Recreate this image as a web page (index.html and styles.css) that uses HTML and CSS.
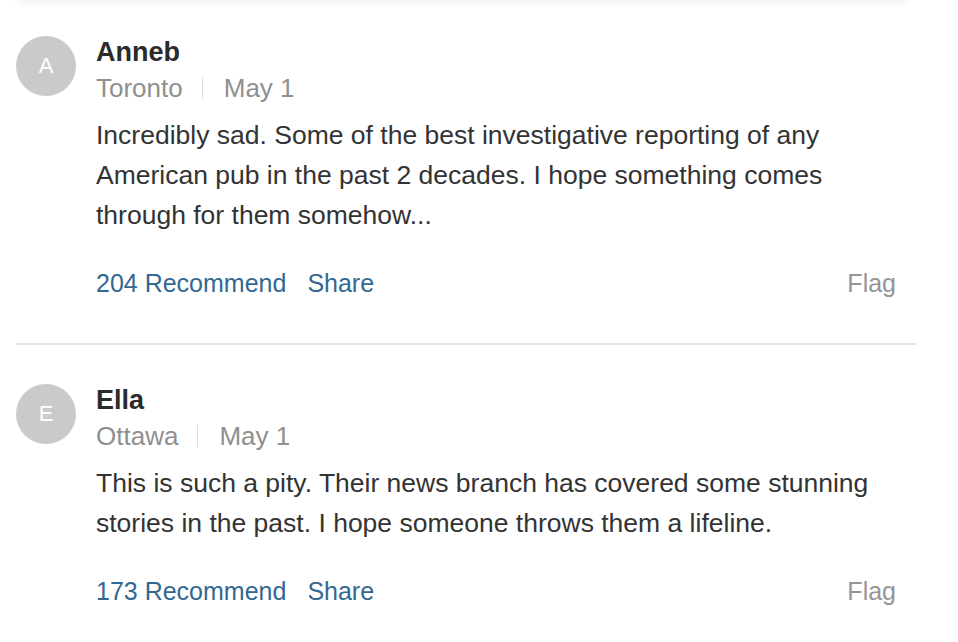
FILE: index.html
```html
<!DOCTYPE html>
<html lang="en">
<head>
    <meta charset="UTF-8">
    <meta name="viewport" content="width=device-width, initial-scale=1.0">
    <title>Comments</title>
    <link rel="stylesheet" href="styles.css">
</head>
<body>
    <div class="prev-card"></div>

    <div class="comment-list">
        <div class="comment">
            <div class="avatar">A</div>
            <div class="comment-body">
                <div class="author">Anneb</div>
                <div class="meta">
                    <span>Toronto</span>
                    <span class="sep"></span>
                    <span>May 1</span>
                </div>
                <p class="text">Incredibly sad. Some of the best investigative reporting of any American pub in the past 2 decades. I hope something comes through for them somehow...</p>
                <div class="actions">
                    <a href="#" class="action">204 Recommend</a>
                    <a href="#" class="action">Share</a>
                    <a href="#" class="flag">Flag</a>
                </div>
            </div>
        </div>

        <div class="comment">
            <div class="avatar">E</div>
            <div class="comment-body">
                <div class="author">Ella</div>
                <div class="meta">
                    <span>Ottawa</span>
                    <span class="sep"></span>
                    <span>May 1</span>
                </div>
                <p class="text">This is such a pity. Their news branch has covered some stunning stories in the past. I hope someone throws them a lifeline.</p>
                <div class="actions">
                    <a href="#" class="action">173 Recommend</a>
                    <a href="#" class="action">Share</a>
                    <a href="#" class="flag">Flag</a>
                </div>
            </div>
        </div>
    </div>
</body>
</html>
```

FILE: styles.css
```css
body {
    font-family: "Liberation Sans", Arial, sans-serif;
    background: #fff;
    margin: 0;
    padding: 0;
    color: #333;
}

/* bottom edge of the card above, mostly scrolled out of view */
.prev-card {
    height: 20px;
    margin: -20px 52px 0 18px;
    background: #fff;
    box-shadow: 0 2px 8px rgba(0, 0, 0, 0.08);
}

.comment-list {
    width: 900px;
    margin-left: 16px;
}

.comment {
    display: flex;
    padding: 39px 0 45px;
    border-bottom: 2px solid #e2e2e2;
}

.comment:first-child {
    padding-top: 36px;
}

.avatar {
    flex: 0 0 60px;
    width: 60px;
    height: 60px;
    border-radius: 50%;
    background: #cacaca;
    color: #fff;
    font-size: 22px;
    display: flex;
    align-items: center;
    justify-content: center;
    margin-right: 20px;
}

.comment-body {
    flex: 1;
    padding-right: 20px;
}

.author {
    font-size: 27px;
    font-weight: bold;
    line-height: 32px;
    color: #2b2b2b;
}

.meta {
    display: flex;
    align-items: center;
    margin-top: 3px;
    font-size: 26px;
    line-height: 34px;
    color: #8f8f8f;
}

.sep {
    width: 1px;
    height: 22px;
    background: #ddd;
    margin: 0 21px 0 19px;
}

.text {
    margin: 10px 0 0;
    font-size: 26.5px;
    line-height: 40px;
    color: #333;
    max-width: 790px;
}

.actions {
    display: flex;
    margin-top: 33px;
    font-size: 25px;
    line-height: 30px;
}

.action {
    color: #326891;
    text-decoration: none;
    margin-right: 21px;
}

.flag {
    color: #959595;
    text-decoration: none;
    margin-left: auto;
}
```
